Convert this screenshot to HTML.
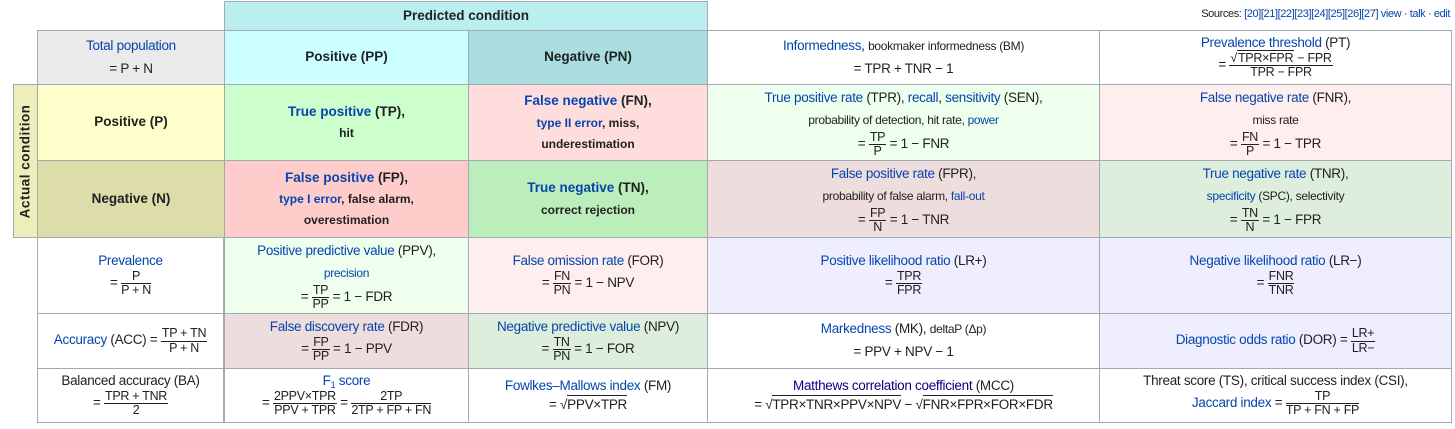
<!DOCTYPE html>
<html><head><meta charset="utf-8"><style>
body{margin:0;width:1455px;height:429px;background:#fff;font-family:"Liberation Sans",Arial,sans-serif;color:#202122;position:relative;overflow:hidden}
.c{position:absolute;box-sizing:border-box;border:1px solid #a2a9b1;display:flex;flex-direction:column;align-items:center;justify-content:center;text-align:center;font-size:13.5px;line-height:1.25;letter-spacing:-0.3px}
a,.l{color:#0645ad;text-decoration:none}
.b{font-weight:bold;font-size:13.5px;letter-spacing:0}
.s{font-size:12px}
.fr{display:inline-flex;flex-direction:column;vertical-align:middle;font-size:12.5px;line-height:1.05;text-align:center}
.fr span:first-child{border-bottom:1px solid #202122;padding:0 1px}
.sq{border-top:1px solid #202122;padding-top:1px}
p{margin:3px 0}
</style></head><body>
<div class="c b" style="left:224px;top:1px;width:484px;height:30px;background:#bbeeee">Predicted condition</div>
<div style="position:absolute;right:5px;top:8px;font-size:11px;letter-spacing:-0.4px">Sources: <span class="l">[20][21][22][23][24][25][26][27]</span> <span class="l">view</span> · <span class="l">talk</span> · <span class="l">edit</span></div>
<div class="c b" style="left:13px;top:84px;width:25px;height:154px;background:#eeeebb"><div style="transform:rotate(-90deg);white-space:nowrap;letter-spacing:0.5px">Actual condition</div></div>

<div class="c" style="left:37px;top:30px;width:188px;height:55px;background:#eaeaea"><p><a>Total population</a></p><p>= P + N</p></div>
<div class="c b" style="left:224px;top:30px;width:245px;height:55px;background:#ccffff">Positive (PP)</div>
<div class="c b" style="left:468px;top:30px;width:240px;height:55px;background:#aadddd">Negative (PN)</div>
<div class="c" style="left:707px;top:30px;width:393px;height:55px"><p><a>Informedness</a>, <span class="s">bookmaker informedness (BM)</span></p><p>= TPR + TNR − 1</p></div>
<div class="c" style="left:1099px;top:30px;width:353px;height:55px"><div><a>Prevalence threshold</a> (PT)</div><div>= <span class="fr"><span>√<span class="sq">TPR×FPR</span> − FPR</span><span>TPR − FPR</span></span></div></div>

<div class="c b" style="left:37px;top:84px;width:188px;height:77px;background:#ffffcc">Positive (P)</div>
<div class="c b" style="left:224px;top:84px;width:245px;height:77px;background:#ccffcc"><p><a>True positive</a> (TP),</p><p class="s">hit</p></div>
<div class="c b" style="left:468px;top:84px;width:240px;height:77px;background:#ffdddd"><p><a>False negative</a> (FN),</p><p class="s"><a>type II error</a>, miss,</p><p class="s">underestimation</p></div>
<div class="c" style="left:707px;top:84px;width:393px;height:77px;background:#eeffee"><p><a>True positive rate</a> (TPR), <a>recall</a>, <a>sensitivity</a> (SEN),</p><p class="s">probability of detection, hit rate, <a>power</a></p><div>= <span class="fr"><span>TP</span><span>P</span></span> = 1 − FNR</div></div>
<div class="c" style="left:1099px;top:84px;width:353px;height:77px;background:#ffeeee"><p><a>False negative rate</a> (FNR),</p><p class="s">miss rate</p><div>= <span class="fr"><span>FN</span><span>P</span></span> = 1 − TPR</div></div>

<div class="c b" style="left:37px;top:160px;width:188px;height:78px;background:#dddda9">Negative (N)</div>
<div class="c b" style="left:224px;top:160px;width:245px;height:78px;background:#ffcccc"><p><a>False positive</a> (FP),</p><p class="s"><a>type I error</a>, false alarm,</p><p class="s">overestimation</p></div>
<div class="c b" style="left:468px;top:160px;width:240px;height:78px;background:#bbeebb"><p><a>True negative</a> (TN),</p><p class="s">correct rejection</p></div>
<div class="c" style="left:707px;top:160px;width:393px;height:78px;background:#eedddd"><p><a>False positive rate</a> (FPR),</p><p class="s">probability of false alarm, <a>fall-out</a></p><div>= <span class="fr"><span>FP</span><span>N</span></span> = 1 − TNR</div></div>
<div class="c" style="left:1099px;top:160px;width:353px;height:78px;background:#ddeedd"><p><a>True negative rate</a> (TNR),</p><p class="s"><a>specificity</a> (SPC), selectivity</p><div>= <span class="fr"><span>TN</span><span>N</span></span> = 1 − FPR</div></div>

<div class="c" style="left:37px;top:237px;width:187px;height:77px"><div><a>Prevalence</a></div><div>= <span class="fr"><span>P</span><span>P + N</span></span></div></div>
<div class="c" style="left:224px;top:237px;width:245px;height:77px;background:#eeffee"><p><a>Positive predictive value</a> (PPV),</p><p class="s"><a>precision</a></p><div>= <span class="fr"><span>TP</span><span>PP</span></span> = 1 − FDR</div></div>
<div class="c" style="left:468px;top:237px;width:240px;height:77px;background:#ffeeee"><div><a>False omission rate</a> (FOR)</div><div>= <span class="fr"><span>FN</span><span>PN</span></span> = 1 − NPV</div></div>
<div class="c" style="left:707px;top:237px;width:393px;height:77px;background:#eeeeff"><div><a>Positive likelihood ratio</a> (LR+)</div><div>= <span class="fr"><span>TPR</span><span>FPR</span></span></div></div>
<div class="c" style="left:1099px;top:237px;width:353px;height:77px;background:#eeeeff"><div><a>Negative likelihood ratio</a> (LR−)</div><div>= <span class="fr"><span>FNR</span><span>TNR</span></span></div></div>

<div class="c" style="left:37px;top:313px;width:187px;height:56px"><div><a>Accuracy</a> (ACC) = <span class="fr"><span>TP + TN</span><span>P + N</span></span></div></div>
<div class="c" style="left:224px;top:313px;width:245px;height:56px;background:#eedddd"><div><a>False discovery rate</a> (FDR)</div><div>= <span class="fr"><span>FP</span><span>PP</span></span> = 1 − PPV</div></div>
<div class="c" style="left:468px;top:313px;width:240px;height:56px;background:#ddeedd"><div><a>Negative predictive value</a> (NPV)</div><div>= <span class="fr"><span>TN</span><span>PN</span></span> = 1 − FOR</div></div>
<div class="c" style="left:707px;top:313px;width:393px;height:56px"><p><a>Markedness</a> (MK), <span class="s">deltaP (Δp)</span></p><p>= PPV + NPV − 1</p></div>
<div class="c" style="left:1099px;top:313px;width:353px;height:56px;background:#eeeeff"><div><a>Diagnostic odds ratio</a> (DOR) = <span class="fr"><span>LR+</span><span>LR−</span></span></div></div>

<div class="c" style="left:37px;top:368px;width:187px;height:55px"><div>Balanced accuracy (BA)</div><div>= <span class="fr"><span>TPR + TNR</span><span>2</span></span></div></div>
<div class="c" style="left:224px;top:368px;width:245px;height:55px"><div><a>F<span style="font-size:9px;position:relative;top:3px">1</span> score</a></div><div>= <span class="fr"><span>2PPV×TPR</span><span>PPV + TPR</span></span> = <span class="fr"><span>2TP</span><span>2TP + FP + FN</span></span></div></div>
<div class="c" style="left:468px;top:368px;width:240px;height:55px"><div><a>Fowlkes–Mallows index</a> (FM)</div><div style="margin-top:2px">= √<span class="sq">PPV×TPR</span></div></div>
<div class="c" style="left:707px;top:368px;width:393px;height:55px"><div><a style="color:#0b0080">Matthews correlation coefficient</a> (MCC)</div><div style="margin-top:2px">= √<span class="sq">TPR×TNR×PPV×NPV</span> − √<span class="sq">FNR×FPR×FOR×FDR</span></div></div>
<div class="c" style="left:1099px;top:368px;width:353px;height:55px"><div>Threat score (TS), critical success index (CSI),</div><div><a>Jaccard index</a> = <span class="fr"><span>TP</span><span>TP + FN + FP</span></span></div></div>
</body></html>
